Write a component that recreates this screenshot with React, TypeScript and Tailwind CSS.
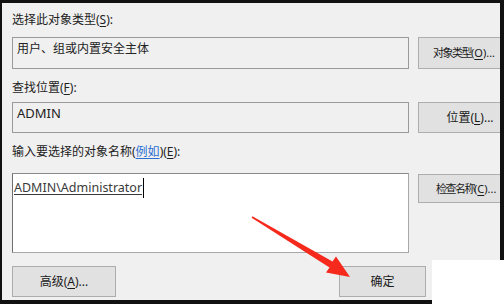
import React from 'react';

const ui = { fontFamily: '"Noto Sans", "Noto Sans CJK SC", sans-serif' };

// letter with an access-key underline
const Key = ({ k }: { k: string }) => <span className="underline underline-offset-2">{k}</span>;

function Btn({ children, className }: { children: React.ReactNode; className: string }) {
  return (
    <div
      className={`flex shrink-0 items-center justify-center border border-[#adadad] bg-[#e1e1e1] text-[#1a1a1a] whitespace-nowrap ${className}`}
    >
      {children}
    </div>
  );
}

export default function App() {
  return (
    <div className="relative h-[304px] w-[504px] overflow-hidden bg-[#111]" style={ui}>
      <div className="ml-[2px] mt-[3px] flex h-[297px] w-[498px] flex-col overflow-hidden bg-[#f0f0f0] pl-[10px] text-[12px] leading-[16px] text-[#222]">
        <div className="mt-[9px]">
          选择此对象类型(<Key k="S" />):
        </div>
        <div className="mt-[9px] flex gap-[9px]">
          <div className="h-[32px] w-[397px] shrink-0 border border-[#9a9a9a] px-[4px] pt-[3px]">用户、组或内置安全主体</div>
          <Btn className="h-[32px] w-[104px] justify-start pl-[14px] text-[11px]">
            <span className="tracking-[-1.5px]">对象类型</span>(<Key k="O" />)...
          </Btn>
        </div>
        <div className="mt-[11px]">
          查找位置(<Key k="F" />):
        </div>
        <div className="mt-[6px] flex gap-[9px]">
          <div className="h-[31px] w-[397px] shrink-0 border border-[#9a9a9a] px-[4px] pt-[2px] text-[13px]">ADMIN</div>
          <Btn className="h-[31px] w-[104px] text-[12px]">
            位置(<Key k="L" />)...
          </Btn>
        </div>
        <div className="mt-[11px]">
          输入要选择的对象名称(
          <span className="text-[#2a6fd0] underline underline-offset-2">例如</span>)(<Key k="E" />):
        </div>
        <div className="mt-[13px] flex gap-[9px]">
          <div className="h-[80px] w-[397px] shrink-0 border border-[#a8a8a8] border-t-[#8a8a8a] border-l-[#707070] bg-white pl-[1px] pt-[4px]">
            <span className="text-[12.5px] leading-[20px] text-[#3a3a3a] underline underline-offset-2">ADMIN\Administrator</span>
            <span className="ml-[1px] inline-block h-[20px] w-[1px] bg-black align-top" />
          </div>
          <Btn className="mt-[1px] h-[29px] w-[104px] justify-start pl-[17px] text-[11px]">
            <span className="tracking-[-1.5px]">检查名称</span>(<Key k="C" />)...
          </Btn>
        </div>
        <div className="mt-[13px] flex">
          <Btn className="h-[31px] w-[104px] text-[12px]">
            高级(<Key k="A" />)...
          </Btn>
          <Btn className="ml-[223px] h-[31px] w-[87px] text-[12px]">确定</Btn>
        </div>
      </div>

      {/* white crop patch at the lower right */}
      <div className="absolute right-0 top-[260px] h-[44px] w-[72px] bg-white" />

      {/* red annotation arrow */}
      <svg className="pointer-events-none absolute left-0 top-0" width="504" height="304" viewBox="0 0 504 304">
        <polygon
          points="252.4,216.3 332.5,261.5 336,256.5 350,277 326,272.5 329.5,267.5 251.6,217.7"
          fill="#f52a1c"
        />
      </svg>
    </div>
  );
}
